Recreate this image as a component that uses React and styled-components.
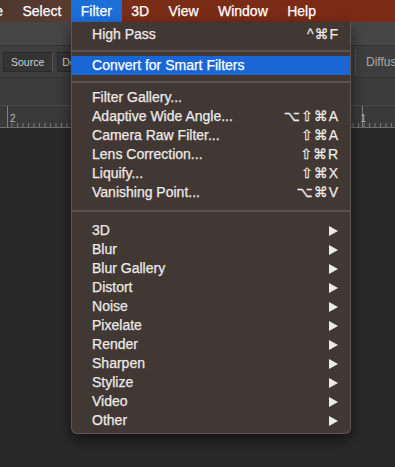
import React from 'react'
import styled, { createGlobalStyle } from 'styled-components'

const GlobalStyle = createGlobalStyle`
  html, body {
    margin: 0;
    padding: 0;
    background: #292929;
  }
  body {
    font-family: "Liberation Sans", "DejaVu Sans", sans-serif;
    -webkit-font-smoothing: antialiased;
  }
`

const Screen = styled.div`
  width: 395px;
  height: 467px;
  overflow: hidden;
  display: flex;
  flex-direction: column;
  background: #292929;
`

/* top mac menu bar */
const MenuBar = styled.div`
  height: 22px;
  flex-shrink: 0;
  background: linear-gradient(90deg, #4f3830 0, #5a3a2f 62px, #7a2c17 125px, #7b2a15 100%);
  position: relative;
  z-index: 5;
`

const MenuList = styled.ul`
  display: flex;
  margin: 0 0 0 -37px;
  padding: 0;
  list-style: none;
  height: 100%;
`

const MenuTitle = styled.li`
  position: relative;
  padding: 0 9.7px;
  line-height: 22px;
  font-size: 14px;
  color: #fff;
  -webkit-text-stroke: 0.25px #fff;
  white-space: nowrap;
  background: ${pr => (pr.$active ? '#1c6ed9' : 'transparent')};
`

/* the open dropdown */
const Dropdown = styled.div`
  position: absolute;
  top: 100%;
  left: 0;
  width: 278px;
  padding: 3px 0 3px;
  background: #413834;
  border: 1px solid #5f5754;
  border-top: none;
  border-radius: 0 0 6px 6px;
  box-shadow: 0 6px 14px rgba(0, 0, 0, 0.55);
  -webkit-text-stroke: 0;
`

const Item = styled.div`
  display: flex;
  align-items: center;
  height: 19px;
  padding: 0 11px 0 20px;
  font-size: 14px;
  line-height: 19px;
  color: ${pr => (pr.$hl ? '#ffffff' : '#eeeae8')};
  -webkit-text-stroke: 0.25px ${pr => (pr.$hl ? '#ffffff' : '#eeeae8')};
  background: ${pr => (pr.$hl ? '#1a66d4' : 'transparent')};
  white-space: nowrap;
`

const Label = styled.span`
  flex: 1;
`

const Shortcut = styled.span`
  letter-spacing: 1px;
  font-size: 14px;
`

const Arrow = styled.span`
  width: 0;
  height: 0;
  border-left: 9px solid #eeeae8;
  border-top: 5px solid transparent;
  border-bottom: 5px solid transparent;
  margin-right: 1px;
`

const Separator = styled.div`
  padding: ${pr => pr.$pad};
  &::after {
    content: '';
    display: block;
    height: 2px;
    background: #5a524f;
  }
`

/* photoshop chrome behind the menu */
const AppBar = styled.div`
  height: 23px;
  flex-shrink: 0;
  background: #464646;
  border-bottom: 1px solid #333;
`

const OptionsBar = styled.div`
  height: 31px;
  flex-shrink: 0;
  display: flex;
  align-items: center;
  padding-left: 3px;
  gap: 4px;
  background: #3e3e3e;
  border-bottom: 1px solid #363636;
`

const ToolButton = styled.div`
  height: 18px;
  padding: 0 8px 0 ${pr => pr.$padL || '7px'};
  display: flex;
  align-items: center;
  font-size: 10.5px;
  color: #cfcfcf;
  background: #343434;
  border: 1px solid #2a2a2a;
  border-right-color: #555;
  white-space: nowrap;
`

const RightGroup = styled.div`
  margin-left: auto;
  width: 29px;
  height: 26px;
  display: flex;
  align-items: center;
  padding-left: 10px;
  border-left: 1px solid #555;
  font-size: 12px;
  color: #a9a9a9;
  white-space: nowrap;
  overflow: hidden;
`

const TabStrip = styled.div`
  height: 27px;
  flex-shrink: 0;
  background: #3b3b3b;
`

const Ruler = styled.div`
  position: relative;
  height: 21px;
  flex-shrink: 0;
  display: flex;
  align-items: flex-end;
  padding: 0 29px 0 10px;
  background: #3a3a3a;
  border-top: 1px solid #4a4a4a;
  border-bottom: 1px solid #6e6e6e;
  font-size: 10px;
  color: #b9b9b9;
`

const RulerNum = styled.span`
  position: relative;
  line-height: 16px;
  margin-left: ${pr => (pr.$end ? 'auto' : '0')};
`

const Ticks = styled.svg`
  position: absolute;
  inset: 0;
`

const Canvas = styled.div`
  flex: 1;
  background: #292929;
`

const items = [
  { t: 'High Pass', k: '^⌘F' },
  { sep: '6px 0 4px' },
  { t: 'Convert for Smart Filters', hl: true },
  { sep: '6px 0 5px' },
  { t: 'Filter Gallery...' },
  { t: 'Adaptive Wide Angle...', k: '⌥⇧⌘A' },
  { t: 'Camera Raw Filter...', k: '⇧⌘A' },
  { t: 'Lens Correction...', k: '⇧⌘R' },
  { t: 'Liquify...', k: '⇧⌘X' },
  { t: 'Vanishing Point...', k: '⌥⌘V' },
  { sep: '8px 0 9px' },
  { t: '3D', sub: true },
  { t: 'Blur', sub: true },
  { t: 'Blur Gallery', sub: true },
  { t: 'Distort', sub: true },
  { t: 'Noise', sub: true },
  { t: 'Pixelate', sub: true },
  { t: 'Render', sub: true },
  { t: 'Sharpen', sub: true },
  { t: 'Stylize', sub: true },
  { t: 'Video', sub: true },
  { t: 'Other', sub: true },
]

const titles = ['Type', 'Select', 'Filter', '3D', 'View', 'Window', 'Help']

function RulerTicks() {
  const small = []
  for (let x = 12; x < 395; x += 5.5) {
    small.push(<line key={x} x1={x} x2={x} y1="17" y2="21" stroke="#7a7a7a" strokeWidth="1" />)
  }
  return (
    <Ticks width="395" height="21">
      {small}
      <line x1="7.5" x2="7.5" y1="0" y2="21" stroke="#808080" />
      <line x1="362.5" x2="362.5" y1="0" y2="21" stroke="#808080" />
    </Ticks>
  )
}

export default function App() {
  return (
    <Screen>
      <GlobalStyle />
      <MenuBar>
        <MenuList>
          {titles.map(t => (
            <MenuTitle key={t} $active={t === 'Filter'}>
              {t}
              {t === 'Filter' && (
                <Dropdown>
                  {items.map((it, i) =>
                    it.sep ? (
                      <Separator key={i} $pad={it.sep} />
                    ) : (
                      <Item key={i} $hl={it.hl}>
                        <Label>{it.t}</Label>
                        {it.k && <Shortcut>{it.k}</Shortcut>}
                        {it.sub && <Arrow />}
                      </Item>
                    )
                  )}
                </Dropdown>
              )}
            </MenuTitle>
          ))}
        </MenuList>
      </MenuBar>
      <AppBar />
      <OptionsBar>
        <ToolButton>Source</ToolButton>
        <ToolButton $padL="4px">Destination</ToolButton>
        <RightGroup>Diffusion</RightGroup>
      </OptionsBar>
      <TabStrip />
      <Ruler>
        <RulerTicks />
        <RulerNum>2</RulerNum>
        <RulerNum $end>1</RulerNum>
      </Ruler>
      <Canvas />
    </Screen>
  )
}
